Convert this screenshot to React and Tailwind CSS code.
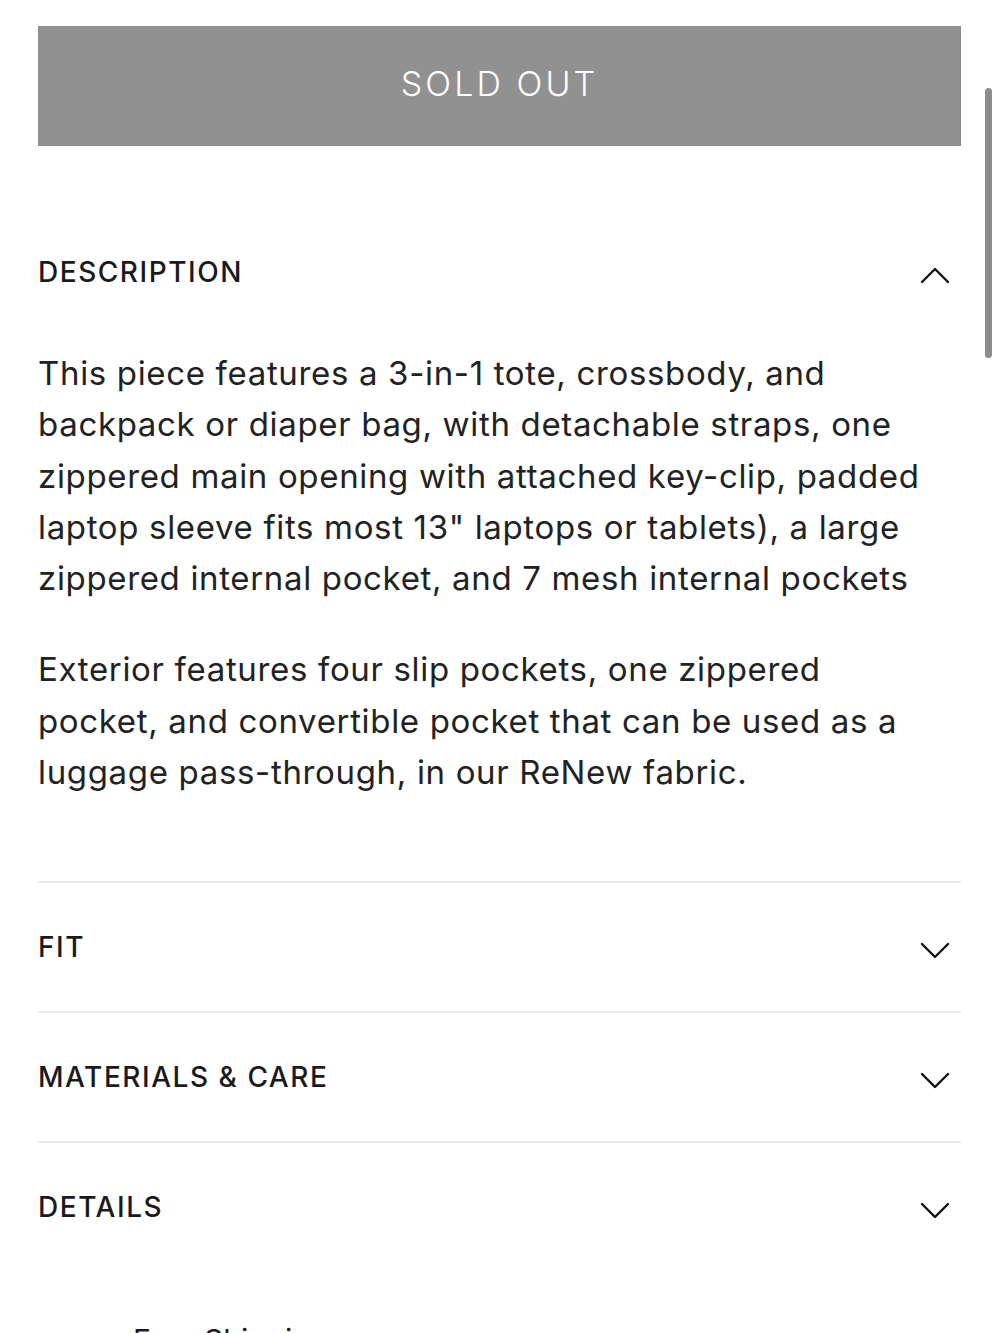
import React from 'react';

const Chevron = ({ up }) => (
    <svg width="30" height="17" viewBox="0 0 30 17" fill="none" className="shrink-0">
        <polyline
            points={up ? '2,15 15,2 28,15' : '2,2 15,15 28,2'}
            stroke="#111"
            strokeWidth="2.4"
            strokeLinecap="round"
            strokeLinejoin="round"
        />
    </svg>
);

const rows = ['FIT', 'MATERIALS & CARE', 'DETAILS'];

export default function App() {
    return (
        <div className="relative h-[1333px] overflow-hidden bg-white text-[#1a1a1a]" style={{ fontFamily: 'Inter, "Noto Sans", sans-serif' }}>
            {/* overlay scrollbar */}
            <div className="absolute right-[8px] top-[88px] h-[270px] w-[7px] rounded-full bg-[#8c8c8c]" />

            <div className="pl-[38px] pr-[39px] pt-[26px]">
                <button className="flex h-[120px] w-full items-center justify-center border border-[#8a8a8a] bg-[#919191] pb-[6px] text-[34px] font-light tracking-[0.09em] text-white">
                    SOLD OUT
                </button>

                {/* Description */}
                <div className="mt-[61px] flex h-[130px] items-center justify-between">
                    <span className="text-[28px] font-medium tracking-[0.055em]">DESCRIPTION</span>
                    <span className="mr-[11px] mt-[6px]"><Chevron up /></span>
                </div>
                <div className="mt-[11px] text-[33px] leading-[51.3px] tracking-[0.02em] text-[#222]">
                    <p>
                        This piece features a 3-in-1 tote, crossbody, and<br />
                        backpack or diaper bag, with detachable straps, one<br />
                        zippered main opening with attached key-clip, padded<br />
                        laptop sleeve fits most 13" laptops or tablets), a large<br />
                        zippered internal pocket, and 7 mesh internal pockets
                    </p>
                    <p className="mt-[40px]">
                        Exterior features four slip pockets, one zippered<br />
                        pocket, and convertible pocket that can be used as a<br />
                        luggage pass-through, in our ReNew fabric.
                    </p>
                </div>

                <div className="mt-[83px]">
                    {rows.map(label => (
                        <div key={label} className="flex h-[130px] items-center justify-between border-t-2 border-[#ececec]">
                            <span className="text-[28px] font-medium tracking-[0.055em]">{label}</span>
                            <span className="mr-[11px] mt-[6px]"><Chevron /></span>
                        </div>
                    ))}
                </div>

                <div className="mt-[54px] pl-[95px] text-[30px] leading-none">Free Shipping</div>
            </div>
        </div>
    );
}
